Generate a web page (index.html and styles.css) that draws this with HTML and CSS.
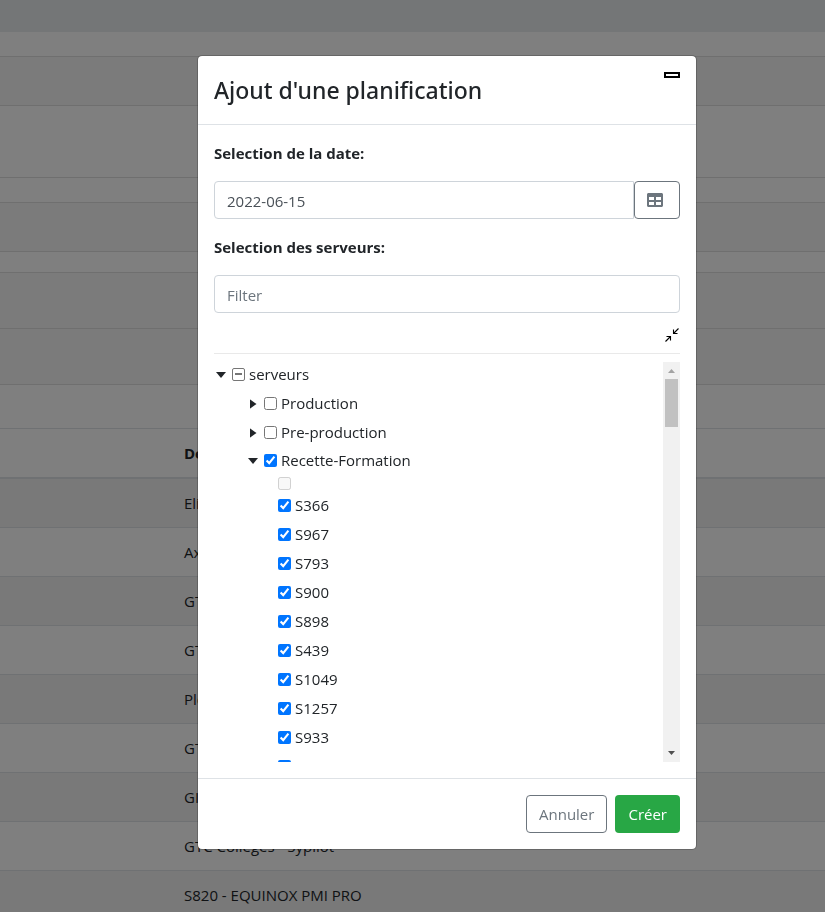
FILE: index.html
```html
<!DOCTYPE html>
<html lang="fr">
<head>
<meta charset="utf-8">
<title>Ajout d'une planification</title>
<link rel="stylesheet" href="styles.css">
</head>
<body>
<div class="page" inert>
  <div class="topbar"></div>
  <section class="card">
    <div class="card-header"></div>
    <div class="card-body"></div>
  </section>
  <section class="card">
    <div class="card-header"></div>
  </section>
  <section class="panels">
    <div class="panel"></div>
    <div class="panel"></div>
  </section>
  <table class="listing">
    <thead><tr><td></td><th scope="col">De</th></tr></thead>
    <tbody>
      <tr><td></td><td>Eli</td></tr>
      <tr><td></td><td>Ax</td></tr>
      <tr><td></td><td>GT</td></tr>
      <tr><td></td><td>GT</td></tr>
      <tr><td></td><td>Ple</td></tr>
      <tr><td></td><td>GT</td></tr>
      <tr><td></td><td>GI</td></tr>
      <tr><td></td><td>GTC Colleges - Sypilot</td></tr>
      <tr><td></td><td>S820 - EQUINOX PMI PRO</td></tr>
    </tbody>
  </table>
</div>

<div class="backdrop">
  <form class="modal" role="dialog" aria-labelledby="modal-title">
    <header class="modal-header">
      <h1 id="modal-title">Ajout d'une planification</h1>
      <button class="close" type="button" aria-label="Fermer"></button>
    </header>
    <div class="modal-body">
      <label class="field-label" for="date">Selection de la date:</label>
      <div class="input-group">
        <input class="control" id="date" type="text" value="2022-06-15">
        <button class="btn btn-outline btn-icon" type="button" aria-label="Calendrier">
          <svg width="16" height="16" viewBox="0 0 512 512" fill="currentColor"><path d="M464 32H48C21.49 32 0 53.49 0 80v352c0 26.51 21.49 48 48 48h416c26.51 0 48-21.49 48-48V80c0-26.51-21.49-48-48-48zM224 416H64v-96h160v96zm0-160H64v-96h160v96zm224 160H288v-96h160v96zm0-160H288v-96h160v96z"/></svg>
        </button>
      </div>
      <label class="field-label" for="filter">Selection des serveurs:</label>
      <input class="control" id="filter" type="text" placeholder="Filter">
      <div class="tools">
        <button class="collapse" type="button" aria-label="Tout replier">
          <svg width="16" height="16" viewBox="0 0 16 16" fill="none" stroke="currentColor" stroke-width="1.1"><path d="M1.500 14.500 6.500 9.500M2.500 9.500h4v4M14.500 1.500 9.500 6.500M9.500 2.500v4h4"/></svg>
        </button>
      </div>
      <div class="tree-box">
        <ul class="tree">
          <li>
            <div class="node"><button class="toggle open" type="button" aria-label="Replier"></button><label><input class="partial" id="root" type="checkbox">serveurs</label></div>
            <ul class="branch">
              <li class="node"><button class="toggle" type="button" aria-label="Déplier"></button><label><input type="checkbox">Production</label></li>
              <li class="node"><button class="toggle" type="button" aria-label="Déplier"></button><label><input type="checkbox">Pre-production</label></li>
              <li>
                <div class="node"><button class="toggle open" type="button" aria-label="Replier"></button><label><input type="checkbox" checked>Recette-Formation</label></div>
                <ul class="leaves">
                  <li class="node empty"><input type="checkbox" disabled aria-label="Vide"></li>
                  <li class="node"><label><input type="checkbox" checked>S366</label></li>
                  <li class="node"><label><input type="checkbox" checked>S967</label></li>
                  <li class="node"><label><input type="checkbox" checked>S793</label></li>
                  <li class="node"><label><input type="checkbox" checked>S900</label></li>
                  <li class="node"><label><input type="checkbox" checked>S898</label></li>
                  <li class="node"><label><input type="checkbox" checked>S439</label></li>
                  <li class="node"><label><input type="checkbox" checked>S1049</label></li>
                  <li class="node"><label><input type="checkbox" checked>S1257</label></li>
                  <li class="node"><label><input type="checkbox" checked>S933</label></li>
                  <li class="node"><label><input type="checkbox" checked>S944</label></li>
                </ul>
              </li>
            </ul>
          </li>
        </ul>
        <div class="scrollbar" aria-hidden="true">
          <svg width="17" height="17" viewBox="0 0 17 17"><path d="M5 11h7L8.500 7z" fill="#a3a3a3"/></svg>
          <div class="thumb"></div>
          <svg class="down" width="17" height="17" viewBox="0 0 17 17"><path d="M5 6h7l-3.500 4z" fill="#505050"/></svg>
        </div>
      </div>
    </div>
    <footer class="modal-footer">
      <button class="btn btn-outline" type="button">Annuler</button>
      <button class="btn btn-success" type="submit">Créer</button>
    </footer>
  </form>
</div>
</body>
</html>
```
FILE: styles.css
```css
* { box-sizing: border-box; }

html, body { height: 100%; }

body {
  margin: 0;
  overflow: hidden;
  background: #fff;
  color: #212529;
  font-family: "Segoe UI", "Open Sans", "Noto Sans", sans-serif;
  font-size: 15px;
  line-height: 24px;
}

button, input { font: inherit; }

ul { list-style: none; margin: 0; padding: 0; }

/* Page behind the dialog */
.topbar { height: 32px; background: #e9ecef; margin-bottom: 24px; }

.card {
  border: solid #dfdfdf;
  border-width: 1px 0;
  margin-bottom: 24px;
}
.card-header { height: 48px; background: #f7f7f7; }
.card-body { height: 72px; border-top: 1px solid #dfdfdf; }
.card + .card { margin-bottom: 20px; }

.panels { margin-bottom: 43px; }
.panel { height: 56px; background: #f7f7f7; border-top: 1px solid #dfdfdf; }
.panel:last-child { height: 57px; border-bottom: 1px solid #dfdfdf; }

.listing {
  width: 100%;
  border-spacing: 0;
  table-layout: fixed;
}
.listing th, .listing td {
  height: 49px;
  padding: 0 12px;
  border-top: 1px solid #dee2e6;
  text-align: left;
}
.listing tr > :first-child { width: 172px; }
.listing thead th, .listing thead td { height: 51px; border-bottom: 2px solid #dee2e6; }
.listing tbody tr:first-child td { height: 48px; border-top: 0; }
.listing tbody tr:nth-child(odd) { background: #f2f2f2; }

/* Dialog */
.backdrop {
  position: fixed;
  inset: 0;
  padding: 55px 16px 55px 197px;
  background: rgba(0, 0, 0, .5);
}
.modal {
  max-width: 500px;
  border: 1px solid rgba(0, 0, 0, .2);
  border-radius: 5px;
  background: #fff;
  background-clip: padding-box;
}
.modal-header {
  display: flex;
  justify-content: space-between;
  align-items: flex-start;
  padding: 16px;
  border-bottom: 1px solid #dee2e6;
}
.modal-header h1 {
  margin: 0;
  font-family: "Segoe UI", "Noto Sans", sans-serif;
  font-size: 23px;
  font-weight: 500;
  line-height: 36px;
}
.close {
  width: 16px;
  height: 6px;
  padding: 0;
  border: 2px solid #000;
  background: #fff;
}
.modal-body { padding: 16px; }

.field-label { display: block; margin-bottom: 16px; font-weight: 700; }

.control {
  display: block;
  width: 100%;
  height: 38px;
  padding: 2px 12px 0;
  border: 1px solid #ced4da;
  border-radius: 4px;
  background: #fff;
  color: #495057;
}
.control::placeholder { color: #6c757d; opacity: 1; }

.input-group { display: flex; margin-bottom: 16px; }
.input-group .control { flex: 1; min-width: 0; border-radius: 4px 0 0 4px; }

.btn {
  height: 38px;
  padding: 0 12px;
  border: 1px solid transparent;
  border-radius: 4px;
}
.btn-outline { border-color: #6c757d; background: #fff; color: #6c757d; }
.btn-success { background: #28a745; color: #fff; }
.btn-icon { width: 46px; text-align: left; }
.btn-icon svg { display: block; }

.tools {
  display: flex;
  justify-content: flex-end;
  height: 41px;
  padding-top: 14px;
  margin-bottom: 8px;
  border-bottom: 1px solid #e9e9e9;
}
.collapse { height: 16px; padding: 0; border: 0; background: none; color: #000; }
.collapse svg { display: block; }

.tree-box { display: flex; height: 400px; }
.tree { flex: 1; overflow: hidden; }
.branch { padding-left: 32px; }
.leaves { padding-left: 32px; }

.node { display: flex; align-items: center; height: 24px; margin-bottom: 5px; }
.node label { display: flex; align-items: center; gap: 4px; }
.node input { width: 13px; height: 13px; margin: 0; }
.branch .node { margin-bottom: 5px; }
.branch > .node + .node { margin-bottom: 4px; }
.branch .node.empty { height: 13px; margin-bottom: 4px; }
.branch .node.empty { margin-bottom: 3px; }

.toggle {
  display: flex;
  justify-content: center;
  width: 14px;
  margin-right: 4px;
  padding: 2px 0 0;
  border: 0;
  background: none;
}
.toggle::before {
  content: "";
  width: 7px;
  height: 10px;
  background: #212529;
  clip-path: polygon(0 0, 100% 50%, 0 100%);
}
.toggle.open::before {
  width: 10px;
  height: 6px;
  clip-path: polygon(0 0, 100% 0, 50% 100%);
}

.partial {
  appearance: none;
  border: 1px solid #767676;
  border-radius: 2px;
  background: linear-gradient(#767676, #767676) center / 7px 2px no-repeat #fff;
}

.scrollbar { display: flex; flex-direction: column; width: 17px; background: #f1f1f1; }
.scrollbar svg { display: block; }
.thumb { height: 48px; margin: 0 2px; background: #c1c1c1; }
.down { margin-top: auto; }

.modal-footer {
  display: flex;
  justify-content: flex-end;
  gap: 8px;
  padding: 16px;
  border-top: 1px solid #dee2e6;
}
```
